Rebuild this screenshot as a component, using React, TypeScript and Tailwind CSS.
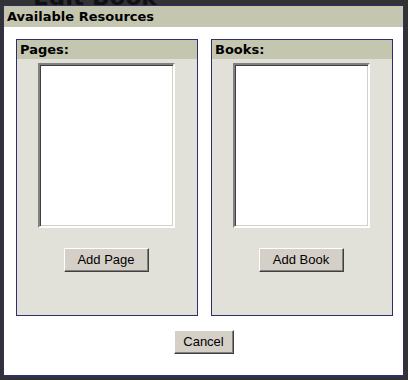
import React from "react";

function Panel({ title, button }: { title: string; button: string }) {
  return (
    <div className="flex h-[277px] w-[182px] flex-col border border-[#2f2f6b] bg-[#e1e1d9]">
      <div className="flex h-[19px] items-center bg-[#c4c6b0] pl-[3px] text-[13px] font-bold leading-none text-black [font-family:'DejaVu_Sans',sans-serif]">
        {title}
      </div>
      <div className="mt-[4px] flex flex-col items-center">
        <div className="ml-[-2px] h-[165px] w-[137px] border-2 border-t-[#808080] border-l-[#808080] border-b-white border-r-white bg-white shadow-[inset_1px_1px_#404040,inset_-1px_-1px_#d4d0c8]" />
        <button className="mt-[20px] ml-[-2px] h-[24px] w-[85px] border border-t-white border-l-white border-b-[#404040] border-r-[#404040] bg-[#d4d0c8] text-[13px] text-black shadow-[inset_-1px_-1px_#808080] [font-family:'Liberation_Sans',Arial,sans-serif]">
          {button}
        </button>
      </div>
    </div>
  );
}

export default function App() {
  return (
    <div className="relative h-[380px] w-[408px] overflow-hidden bg-[#323232]">
      <div className="absolute left-[33px] top-[-20px] text-[23px] font-bold text-[#111] [font-family:'DejaVu_Sans',sans-serif]">
        Edit Book
      </div>
      <div className="relative ml-[3px] mt-[5px] flex h-[372px] w-[401px] flex-col border border-b-2 border-[#2f2f6b] bg-white">
        <div className="flex h-[21px] items-center bg-[#c4c6b0] pl-[3px] text-[13px] font-bold leading-none text-black [font-family:'DejaVu_Sans',sans-serif]">
          Available Resources
        </div>
        <div className="mt-[12px] flex gap-[13px] pl-[12px]">
          <Panel title="Pages:" button="Add Page" />
          <Panel title="Books:" button="Add Book" />
        </div>
        <div className="mt-[14px] flex justify-center">
          <button className="h-[24px] w-[60px] border border-t-white border-l-white border-b-[#404040] border-r-[#404040] bg-[#d4d0c8] text-[13px] text-black shadow-[inset_-1px_-1px_#808080] [font-family:'Liberation_Sans',Arial,sans-serif]">
            Cancel
          </button>
        </div>
      </div>
    </div>
  );
}
